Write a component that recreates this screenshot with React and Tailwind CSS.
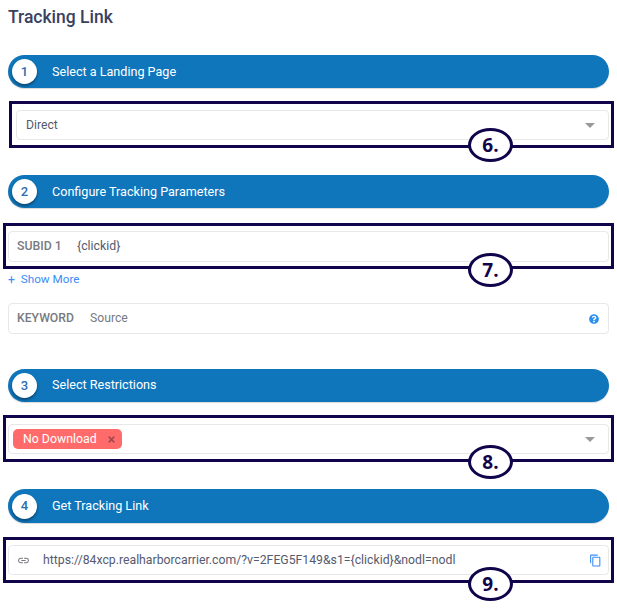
import React from "react";
import { FaQuestionCircle } from "react-icons/fa";

const fieldClass = "relative flex items-center rounded-[4px] border border-[#e8e8e8] bg-white";

function StepBar({ n, label, className = "", labelClass = "" }) {
  return (
    <div className={`flex h-[33px] items-center rounded-full bg-[#0f76bc] pl-[4px] shadow-[0_1px_1px_rgba(0,0,0,0.15)] ${className}`}>
      <div className="flex h-[25px] w-[25px] items-center justify-center rounded-full bg-white text-[13px] font-medium text-[#2c6db0] shadow-[0_2px_3px_rgba(0,0,0,0.4)]">
        {n}
      </div>
      <span className={`ml-[15px] text-[12.6px] font-normal text-white ${labelClass}`}>{label}</span>
    </div>
  );
}

function Callout({ n, className, badgeClass }) {
  return (
    <div className={`pointer-events-none absolute border-[3px] border-[#12044a] ${className}`}>
      <div className={`absolute flex h-[34px] w-[45px] items-center justify-center rounded-[50%] border-[3px] border-[#12044a] bg-white font-['Open_Sans',sans-serif] text-[19px] font-bold text-[#12044a] ${badgeClass}`}>
        {n}.
      </div>
    </div>
  );
}

function Caret() {
  return <div className="ml-auto mr-[13px] h-0 w-0 border-x-[5px] border-t-[5px] border-x-transparent border-t-[#999999]" />;
}

export default function App() {
  return (
    <div className="h-[611px] w-[617px] overflow-hidden bg-white px-[8px] pt-[6px] font-['Roboto',sans-serif]">
      <h1 className="h-[22px] text-[17.5px] font-medium leading-[22px] text-[#3a4160]">Tracking Link</h1>

      <StepBar n={1} label="Select a Landing Page" labelClass="pt-[1px]" className="mt-[27px]" />
      <div className="relative ml-[8px] mt-[22px]">
        <div className={`${fieldClass} h-[30px] pl-[9px] text-[12.2px] text-[#555a6e]`}>
          Direct
          <Caret />
        </div>
        <Callout n={6} badgeClass="left-[456px] bottom-[-17px]" className="-left-[7px] -right-[5px] -top-[9px] h-[47px]" />
      </div>

      <StepBar n={2} label="Configure Tracking Parameters" labelClass="pt-[1px]" className="mt-[35px]" />
      <div className="relative mt-[23px]">
        <div className={`${fieldClass} h-[31px] pl-[8px] text-[12.3px]`}>
          <span className="w-[60px] font-medium text-[#777a80]">SUBID 1</span>
          <span className="text-[#555a6e]">{"{clickid}"}</span>
        </div>
        <Callout n={7} badgeClass="left-[462px] bottom-[-21px]" className="-left-[5px] -right-[5px] -top-[8px] h-[46px]" />
      </div>
      <div className="mt-[10px] flex h-[16px] items-center text-[11.7px] text-[#3b8cf5]">
        <span className="mr-[6px] text-[12px]">+</span>Show More
      </div>
      <div className={`${fieldClass} mt-[15px] h-[31px] pl-[8px] text-[12.2px]`}>
        <span className="w-[73px] font-medium text-[#777a80]">KEYWORD</span>
        <span className="text-[#777a80]">Source</span>
        <FaQuestionCircle className="ml-auto mr-[9px] text-[10px] text-[#2b8ff0]" />
      </div>

      <StepBar n={3} label="Select Restrictions" className="mt-[35px]" />
      <div className="relative mt-[22px]">
        <div className={`${fieldClass} h-[30px] pl-[4px]`}>
          <div className="flex h-[20px] w-[109px] items-center rounded-[5px] bg-[#ff6b6b] pl-[10px] text-[12.3px] text-white">
            No Download
            <svg viewBox="0 0 10 10" className="ml-[11px] h-[7px] w-[7px] text-[#a34a52]" fill="none" stroke="currentColor" strokeWidth="2.4">
              <path d="M1 1l8 8M9 1l-8 8" />
            </svg>
          </div>
          <Caret />
        </div>
        <Callout n={8} badgeClass="left-[462px] bottom-[-20px]" className="-left-[5px] -right-[5px] -top-[9px] h-[47px]" />
      </div>

      <StepBar n={4} label="Get Tracking Link" className="mt-[35px] !h-[34px]" />
      <div className="relative mt-[22px]">
        <div className={`${fieldClass} h-[30px] pl-[8px] text-[12.25px] text-[#555a6e]`}>
          <svg viewBox="0 0 24 24" className="h-[13px] w-[13px] text-[#777a80]" fill="currentColor">
            <path d="M3.9 12c0-1.71 1.39-3.1 3.1-3.1h4V7H7c-2.76 0-5 2.24-5 5s2.24 5 5 5h4v-1.9H7c-1.71 0-3.1-1.39-3.1-3.1zM8 13h8v-2H8v2zm9-6h-4v1.9h4c1.71 0 3.1 1.39 3.1 3.1s-1.39 3.1-3.1 3.1h-4V17h4c2.76 0 5-2.24 5-5s-2.24-5-5-5z" />
          </svg>
          <span className="ml-[13px]">https://84xcp.realharborcarrier.com/?v=2FEG5F149&amp;s1={"{clickid}"}&amp;nodl=nodl</span>
          <svg viewBox="0 0 24 24" className="ml-auto mr-[6px] h-[13px] w-[13px] text-[#3b8cf5]" fill="currentColor">
            <path d="M16 1H4c-1.1 0-2 .9-2 2v14h2V3h12V1zm3 4H8c-1.1 0-2 .9-2 2v14c0 1.1.9 2 2 2h11c1.1 0 2-.9 2-2V7c0-1.1-.9-2-2-2zm0 16H8V7h11v14z" />
          </svg>
        </div>
        <Callout n={9} badgeClass="left-[462px] bottom-[-21px]" className="-left-[5px] -right-[5px] -top-[8px] h-[46px]" />
      </div>
    </div>
  );
}
